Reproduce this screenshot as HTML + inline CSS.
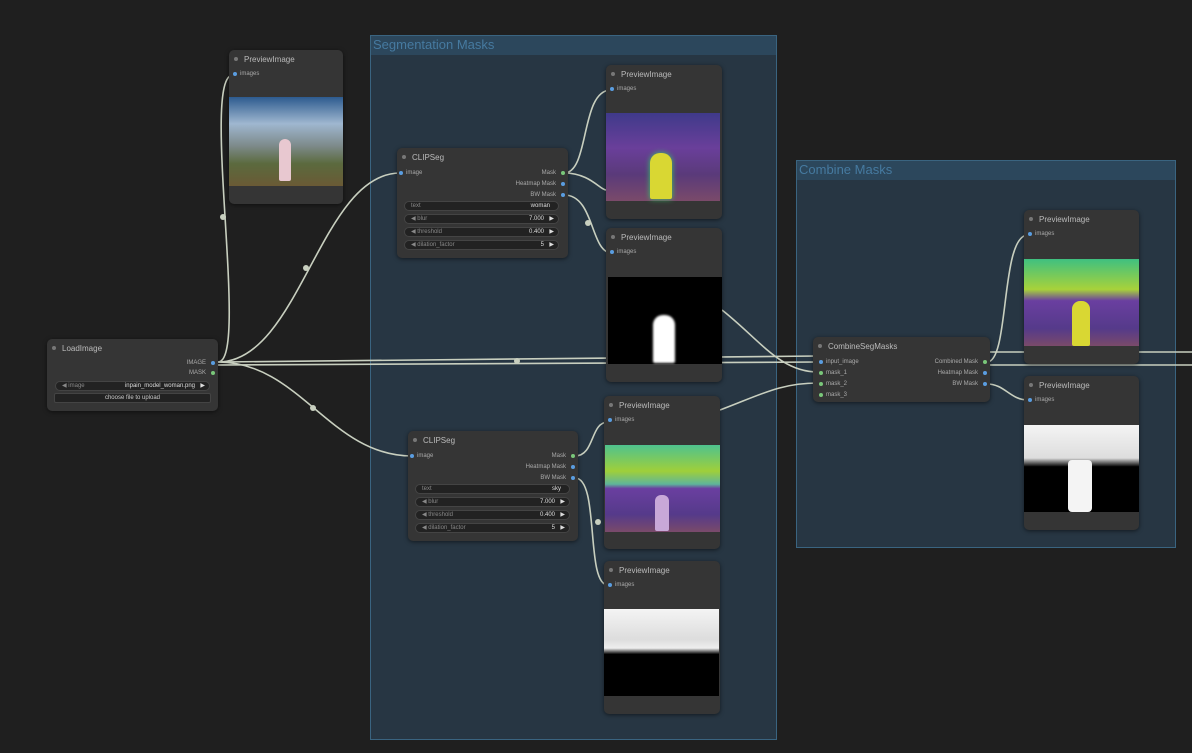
<!DOCTYPE html><html><head><style>
*{margin:0;padding:0;box-sizing:border-box}
body{width:1192px;height:753px;background:#1f1f1f;position:relative;overflow:hidden;font-family:"Liberation Sans",sans-serif;color:#bbb}
.g{position:absolute;background:#273643;border:1px solid #3a6480}
.g .t{height:19px;background:#2c475c;color:#467aa0;font-size:13px;padding:1px 2px}
.n{position:absolute;background:#353535;border-radius:5px;box-shadow:0 1px 4px #0008}
.h{font-size:8px;color:#bbb;padding:5px 0 0 15px;height:17px;position:relative}
.h:before{content:"";position:absolute;left:5px;top:7px;width:4px;height:4px;border-radius:50%;background:#777}
.s{position:absolute;font-size:6px;color:#aaa;white-space:nowrap}
.d{position:absolute;width:4px;height:4px;border-radius:50%;background:#5a9de0}
.dg{background:#7ac77a}
.w{position:absolute;height:10px;line-height:8px;background:#222;border-radius:5px;font-size:6px;color:#888;padding:0 6px;border:1px solid #444}
.w b{position:absolute;right:14px;color:#ddd;font-weight:normal;top:0}
.w span{position:absolute;right:4px;top:0;color:#ddd}
.im{position:absolute}
</style></head><body>
<div class="g" style="left:370px;top:35px;width:407px;height:705px"><div class="t">Segmentation Masks</div></div>
<div class="g" style="left:796px;top:160px;width:380px;height:388px"><div class="t">Combine Masks</div></div>

<svg style="position:absolute;left:0;top:0" width="1192" height="753"><g fill="none" stroke="#c8cfbf" stroke-width="1.6">
<path d="M218 362 C250 362 200 75 233 75"/>
<path d="M218 362 C300 362 320 173 400 173"/>
<path d="M218 362 C300 362 330 456 412 456"/>
<path d="M218 362 L818 356"/>
<path d="M218 365 L818 362"/>
<path d="M564 173 C590 173 580 90 611 90"/>
<path d="M564 173 C590 173 600 190 606 190"/>
<path d="M564 195 C595 195 590 253 612 253"/>
<path d="M722 310 C760 340 780 372 818 372"/>
<path d="M575 456 C595 456 590 422 608 422"/>
<path d="M575 478 C600 478 585 585 608 585"/>
<path d="M720 410 C760 395 780 383 818 383"/>
<path d="M987 362 C1010 362 1000 235 1028 235"/>
<path d="M987 384 C1005 384 1010 400 1028 400"/>
<path d="M987 352 L1192 352"/><path d="M987 365 L1192 365"/>
</g><g fill="#c8cfbf"><circle cx="223" cy="217" r="3"/><circle cx="306" cy="268" r="3"/><circle cx="313" cy="408" r="3"/><circle cx="517" cy="361" r="3"/><circle cx="588" cy="223" r="3"/><circle cx="598" cy="522" r="3"/></g></svg>

<div class="n" style="left:229px;top:50px;width:114px;height:154px"><div class="h">PreviewImage</div><div class="d" style="left:4px;top:22px"></div><div class="s" style="left:11px;top:21px">images</div>
<div class="im" style="left:0;top:47px;width:114px;height:89px;background:linear-gradient(#2d5b8f,#9fb7d0 30%,#7d8a8a 55%,#5b6a3e 75%,#6a5a35)"><div style="position:absolute;left:50px;top:42px;width:12px;height:42px;border-radius:6px 6px 2px 2px;background:#e8c8d0"></div></div></div>

<div class="n" style="left:47px;top:339px;width:171px;height:72px"><div class="h">LoadImage</div>
<div class="s" style="right:12px;top:21px">IMAGE</div><div class="d" style="right:3px;top:22px"></div>
<div class="s" style="right:12px;top:31px">MASK</div><div class="d dg" style="right:3px;top:32px"></div>
<div class="w" style="left:8px;top:42px;width:155px">◀ image<b>inpain_model_woman.png</b><span>▶</span></div>
<div class="w" style="left:7px;top:54px;width:157px;border-radius:2px;text-align:center;color:#ccc">choose file to upload</div></div>

<div class="n" style="left:397px;top:148px;width:171px;height:110px"><div class="h">CLIPSeg</div>
<div class="d" style="left:2px;top:23px"></div><div class="s" style="left:9px;top:22px">image</div>
<div class="s" style="right:12px;top:22px">Mask</div><div class="d dg" style="right:3px;top:23px"></div>
<div class="s" style="right:12px;top:33px">Heatmap Mask</div><div class="d" style="right:3px;top:34px"></div>
<div class="s" style="right:12px;top:44px">BW Mask</div><div class="d" style="right:3px;top:45px"></div>
<div class="w" style="left:7px;top:53px;width:155px">text<b style="right:8px">woman</b></div>
<div class="w" style="left:7px;top:66px;width:155px">◀ blur<b>7.000</b><span>▶</span></div>
<div class="w" style="left:7px;top:79px;width:155px">◀ threshold<b>0.400</b><span>▶</span></div>
<div class="w" style="left:7px;top:92px;width:155px">◀ dilation_factor<b>5</b><span>▶</span></div></div>

<div class="n" style="left:408px;top:431px;width:170px;height:110px"><div class="h">CLIPSeg</div>
<div class="d" style="left:2px;top:23px"></div><div class="s" style="left:9px;top:22px">image</div>
<div class="s" style="right:12px;top:22px">Mask</div><div class="d dg" style="right:3px;top:23px"></div>
<div class="s" style="right:12px;top:33px">Heatmap Mask</div><div class="d" style="right:3px;top:34px"></div>
<div class="s" style="right:12px;top:44px">BW Mask</div><div class="d" style="right:3px;top:45px"></div>
<div class="w" style="left:7px;top:53px;width:155px">text<b style="right:8px">sky</b></div>
<div class="w" style="left:7px;top:66px;width:155px">◀ blur<b>7.000</b><span>▶</span></div>
<div class="w" style="left:7px;top:79px;width:155px">◀ threshold<b>0.400</b><span>▶</span></div>
<div class="w" style="left:7px;top:92px;width:155px">◀ dilation_factor<b>5</b><span>▶</span></div></div>

<div class="n" style="left:606px;top:65px;width:116px;height:154px"><div class="h">PreviewImage</div><div class="d" style="left:4px;top:22px"></div><div class="s" style="left:11px;top:21px">images</div>
<div class="im" style="left:0;top:48px;width:114px;height:88px;background:linear-gradient(#3f3a8a,#6a3f9a 40%,#5a3a7a 70%,#7a4a6a)"><div style="position:absolute;left:44px;top:40px;width:22px;height:46px;border-radius:10px 10px 2px 2px;background:#d9d733;box-shadow:0 0 6px #3c6"></div></div></div>

<div class="n" style="left:606px;top:228px;width:116px;height:154px"><div class="h">PreviewImage</div><div class="d" style="left:4px;top:22px"></div><div class="s" style="left:11px;top:21px">images</div>
<div class="im" style="left:2px;top:49px;width:114px;height:87px;background:#000"><div style="position:absolute;left:45px;top:38px;width:22px;height:48px;border-radius:10px 10px 2px 2px;background:#fff;filter:blur(1px)"></div></div></div>

<div class="n" style="left:604px;top:396px;width:116px;height:153px"><div class="h">PreviewImage</div><div class="d" style="left:4px;top:22px"></div><div class="s" style="left:11px;top:21px">images</div>
<div class="im" style="left:1px;top:49px;width:115px;height:87px;background:linear-gradient(#4fc28e,#9fcf3a 30%,#5fb49a 45%,#6a3fa0 50%,#553a8a 80%,#7a4a6a)"><div style="position:absolute;left:50px;top:50px;width:14px;height:36px;border-radius:6px 6px 2px 2px;background:#c8a8d8"></div></div></div>

<div class="n" style="left:604px;top:561px;width:116px;height:153px"><div class="h">PreviewImage</div><div class="d" style="left:4px;top:22px"></div><div class="s" style="left:11px;top:21px">images</div>
<div class="im" style="left:0;top:48px;width:115px;height:87px;background:linear-gradient(#f4f4f4,#ddd 35%,#eee 45%,#000 52%)"></div></div>

<div class="n" style="left:813px;top:337px;width:177px;height:65px"><div class="h">CombineSegMasks</div>
<div class="d" style="left:6px;top:23px"></div><div class="s" style="left:13px;top:22px">input_image</div>
<div class="d dg" style="left:6px;top:34px"></div><div class="s" style="left:13px;top:33px">mask_1</div>
<div class="d dg" style="left:6px;top:45px"></div><div class="s" style="left:13px;top:44px">mask_2</div>
<div class="d dg" style="left:6px;top:56px"></div><div class="s" style="left:13px;top:55px">mask_3</div>
<div class="s" style="right:12px;top:22px">Combined Mask</div><div class="d dg" style="right:3px;top:23px"></div>
<div class="s" style="right:12px;top:33px">Heatmap Mask</div><div class="d" style="right:3px;top:34px"></div>
<div class="s" style="right:12px;top:44px">BW Mask</div><div class="d" style="right:3px;top:45px"></div></div>

<div class="n" style="left:1024px;top:210px;width:115px;height:154px"><div class="h">PreviewImage</div><div class="d" style="left:4px;top:22px"></div><div class="s" style="left:11px;top:21px">images</div>
<div class="im" style="left:0;top:49px;width:115px;height:87px;background:linear-gradient(#3fc080,#a8d23a 35%,#6a3fa0 48%,#553a8a 80%,#7a4a6a)"><div style="position:absolute;left:48px;top:42px;width:18px;height:45px;border-radius:8px 8px 2px 2px;background:#d9d733"></div></div></div>

<div class="n" style="left:1024px;top:376px;width:115px;height:154px"><div class="h">PreviewImage</div><div class="d" style="left:4px;top:22px"></div><div class="s" style="left:11px;top:21px">images</div>
<div class="im" style="left:0;top:49px;width:115px;height:87px;background:linear-gradient(#f4f4f4,#ddd 38%,#000 48%)"><div style="position:absolute;left:44px;top:35px;width:24px;height:52px;background:#f4f4f4;border-radius:4px"></div></div></div>
</body></html>
